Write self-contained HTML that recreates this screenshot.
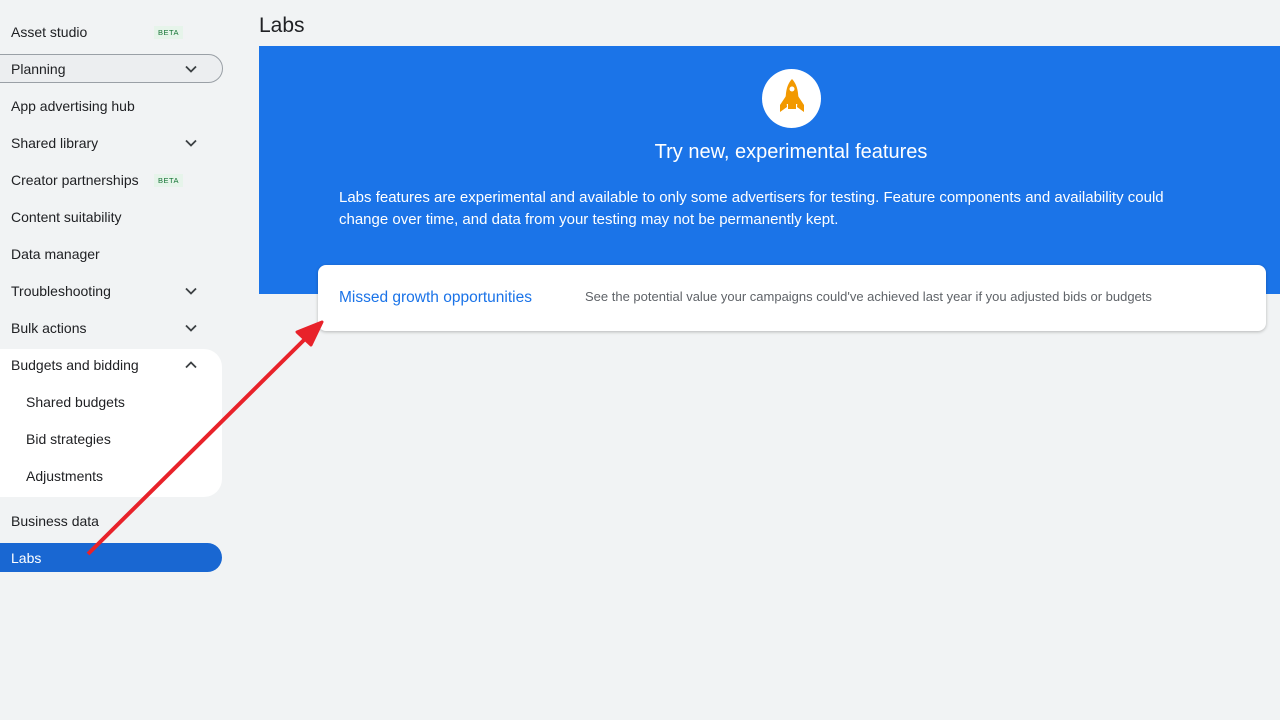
<!DOCTYPE html><html><head><style>
body{margin:0;width:1280px;height:720px;background:#f1f3f4;font-family:"Liberation Sans",sans-serif;position:relative;overflow:hidden;color:#202124}
.it{position:absolute;left:11px;font-size:14px;height:20px;line-height:20px;top:0}
.chev{position:absolute;left:184px;width:14px;height:14px}
.beta{position:absolute;font-size:7.5px;color:#137333;background:#e6f4ea;padding:2px 4px;letter-spacing:.5px}
</style></head><body>
<div style="position:absolute;left:0;top:349px;width:222px;height:148px;background:#fff;border-radius:0 18px 18px 0"></div>
<div style="position:absolute;left:-20px;top:54px;width:241px;height:27px;border:1px solid #9aa0a6;border-radius:15px;background:#eceef0"></div>
<div style="position:absolute;left:0;top:543px;width:222px;height:29px;background:#1967d2;border-radius:0 15px 15px 0"></div>
<div class="it" style="top:22px">Asset studio</div><div class="beta" style="left:154px;top:26px">BETA</div>
<div class="it" style="top:59px">Planning</div>
<div class="it" style="top:96px">App advertising hub</div>
<div class="it" style="top:133px">Shared library</div>
<div class="it" style="top:170px">Creator partnerships</div><div class="beta" style="left:154px;top:174px">BETA</div>
<div class="it" style="top:207px">Content suitability</div>
<div class="it" style="top:244px">Data manager</div>
<div class="it" style="top:281px">Troubleshooting</div>
<div class="it" style="top:318px">Bulk actions</div>
<div class="it" style="top:355px">Budgets and bidding</div>
<div class="it" style="top:392px;left:26px">Shared budgets</div>
<div class="it" style="top:429px;left:26px">Bid strategies</div>
<div class="it" style="top:466px;left:26px">Adjustments</div>
<div class="it" style="top:511px">Business data</div>
<div class="it" style="top:548px;color:#fff">Labs</div>
<svg class="chev" style="top:62px" viewBox="0 0 14 14"><path d="M2 4.5l5 5 5-5" fill="none" stroke="#3c4043" stroke-width="1.8"/></svg>
<svg class="chev" style="top:136px" viewBox="0 0 14 14"><path d="M2 4.5l5 5 5-5" fill="none" stroke="#3c4043" stroke-width="1.8"/></svg>
<svg class="chev" style="top:284px" viewBox="0 0 14 14"><path d="M2 4.5l5 5 5-5" fill="none" stroke="#3c4043" stroke-width="1.8"/></svg>
<svg class="chev" style="top:321px" viewBox="0 0 14 14"><path d="M2 4.5l5 5 5-5" fill="none" stroke="#3c4043" stroke-width="1.8"/></svg>
<svg class="chev" style="top:358px" viewBox="0 0 14 14"><path d="M2 9.5l5-5 5 5" fill="none" stroke="#3c4043" stroke-width="1.8"/></svg>
<div style="position:absolute;left:259px;top:14px;font-size:21px;color:#202124">Labs</div>
<div style="position:absolute;left:259px;top:46px;width:1021px;height:248px;background:#1b74e8"></div>
<div style="position:absolute;left:762px;top:69px;width:59px;height:59px;border-radius:50%;background:#fff"></div>
<svg style="position:absolute;left:776px;top:76px" width="32" height="42" viewBox="0 0 32 42"><path d="M16 3C10.5 9 9.5 16 9.5 28h13C22.5 16 21.5 9 16 3z" fill="#f29900"/><path d="M10 20L4 29v7l7-5zM22 20l6 9v7l-7-5z" fill="#f29900"/><rect x="12" y="28" width="8" height="5" fill="#f29900"/><circle cx="16" cy="13" r="2.5" fill="#fff"/></svg>
<div style="position:absolute;left:259px;width:1064px;top:141px;text-align:center;font-size:20px;color:#fff">Try new, experimental features</div>
<div style="position:absolute;left:339px;top:187px;width:870px;font-size:15px;line-height:22px;color:#fff">Labs features are experimental and available to only some advertisers for testing. Feature components and availability could change over time, and data from your testing may not be permanently kept.</div>
<div style="position:absolute;left:318px;top:265px;width:948px;height:66px;background:#fff;border-radius:8px;box-shadow:0 1px 3px rgba(0,0,0,.25)"></div>
<div style="position:absolute;left:339px;top:289px;font-size:15.5px;color:#1a73e8">Missed growth opportunities</div>
<div style="position:absolute;left:585px;top:289px;font-size:13px;color:#5f6368">See the potential value your campaigns could've achieved last year if you adjusted bids or budgets</div>
<svg style="position:absolute;left:0;top:0" width="1280" height="720"><line x1="88" y1="554" x2="308" y2="336" stroke="#e8222a" stroke-width="4"/><path d="M322 322L297 332L311 345z" fill="#e8222a" stroke="#e8222a" stroke-width="3" stroke-linejoin="round"/></svg>
</body></html>
